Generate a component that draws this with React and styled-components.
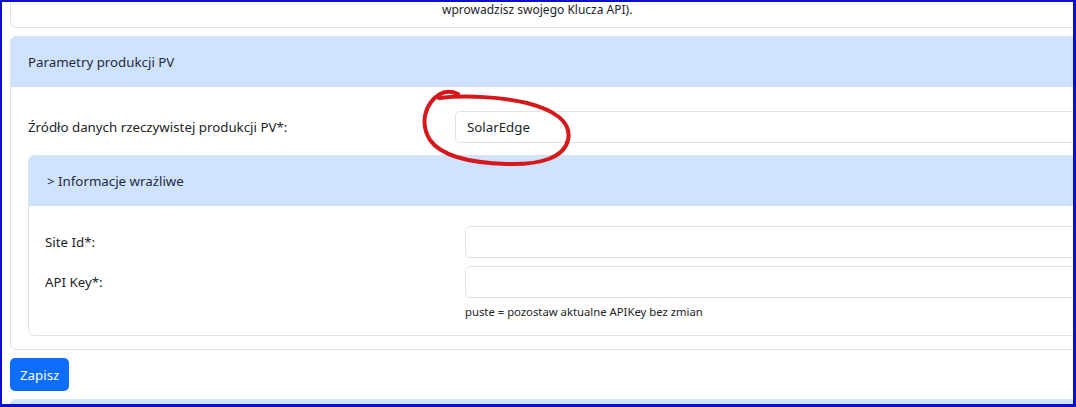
import styled, { createGlobalStyle } from "styled-components";

const GlobalStyle = createGlobalStyle`
  html, body {
    margin: 0;
    padding: 0;
    background: #fff;
    overflow: hidden;
  }
  * {
    box-sizing: border-box;
  }
`;

const Frame = styled.div`
  position: relative;
  width: 1076px;
  height: 407px;
  overflow: hidden;
  border-style: solid;
  border-color: #0a10c8;
  border-width: 2px 3px 3px 2px;
  font-family: "Noto Sans", "Open Sans", sans-serif;
  font-size: 13.3px;
  color: #212529;
  background: #fff;
`;

const Page = styled.div`
  width: 1240px;
  padding-left: 8px;
  display: flex;
  flex-direction: column;
  align-items: flex-start;
  gap: 8px;
`;

const Card = styled.div`
  width: 100%;
  border: 1px solid #dee2e6;
  border-radius: 6px;
  background: #fff;
  overflow: hidden;
`;

const TopCard = styled(Card)`
  margin-top: -14px;
  height: 40px;
  padding: 0 0 0 431px;
`;

const CardHeader = styled.div`
  height: 50px;
  display: flex;
  align-items: center;
  padding: 0 ${(p) => p.$pad || 17}px;
  background: #cfe2ff;
  color: #1f2b3b;
  font-size: 13.3px;
`;

const CardBody = styled.div`
  padding: ${(p) => p.$pad};
`;

const FieldRow = styled.div`
  display: grid;
  grid-template-columns: ${(p) => p.$label}px 1fr;
  align-items: start;
  margin-bottom: ${(p) => p.$mb || 0}px;
`;

const Label = styled.label`
  height: 32px;
  display: flex;
  align-items: center;
  font-size: 13.3px;
`;

const Control = styled.div`
  height: 32px;
  display: flex;
  align-items: center;
  padding: 0 11px;
  border: 1px solid #dee2e6;
  border-radius: 5px;
  background: #fff;
  font-size: 13.3px;
  color: #212529;
`;

const Help = styled.div`
  margin-top: ${(p) => p.$mt ?? 7}px;
  font-size: ${(p) => p.$size || 11.3}px;
  line-height: 14px;
  color: #212529;
`;

const Stack = styled.div`
  display: flex;
  flex-direction: column;
`;

const Button = styled.button`
  height: 33px;
  padding: 0 10px;
  border: none;
  border-radius: 5px;
  background: #0d6efd;
  color: #fff;
  font-family: "Noto Sans", "Open Sans", sans-serif;
  font-size: 13.3px;
`;

const NextCard = styled.div`
  width: 100%;
  height: 20px;
  border-radius: 6px 6px 0 0;
  background: #d3e3fb;
`;

const Scribble = styled.svg`
  position: absolute;
  left: 416px;
  top: 82px;
  pointer-events: none;
`;

export default function App() {
  return (
    <>
      <GlobalStyle />
      <Frame>
        <Page>
          <TopCard>
            <Help $mt={14} $size={12}>
              wprowadzisz swojego Klucza API).
            </Help>
          </TopCard>

          <Card>
            <CardHeader>Parametry produkcji PV</CardHeader>
            <CardBody $pad="24px 17px 13px 17px">
              <FieldRow $label={427} $mb={12}>
                <Label>Źródło danych rzeczywistej produkcji PV*:</Label>
                <Control>SolarEdge</Control>
              </FieldRow>

              <Card>
                <CardHeader $pad={18}>&gt; Informacje wrażliwe</CardHeader>
                <CardBody $pad="20px 16px 16px 16px">
                  <FieldRow $label={420} $mb={8}>
                    <Label>Site Id*:</Label>
                    <Control />
                  </FieldRow>
                  <FieldRow $label={420}>
                    <Label>API Key*:</Label>
                    <Stack>
                      <Control />
                      <Help>puste = pozostaw aktualne APIKey bez zmian</Help>
                    </Stack>
                  </FieldRow>
                </CardBody>
              </Card>
            </CardBody>
          </Card>

          <Button>Zapisz</Button>
          <NextCard />
        </Page>

        <Scribble width="160" height="90" viewBox="416 82 160 90">
          <path
            d="M437 96 C 465 93, 500 95, 525 101 C 552 108, 570 120, 566 138 C 562 155, 540 163, 505 162 C 470 161, 440 155, 428 138 C 418 122, 422 102, 438 92 C 446 88, 452 90, 456 92"
            fill="none"
            stroke="#d6181c"
            strokeWidth="4"
            strokeLinecap="round"
            strokeLinejoin="round"
          />
        </Scribble>
      </Frame>
    </>
  );
}
